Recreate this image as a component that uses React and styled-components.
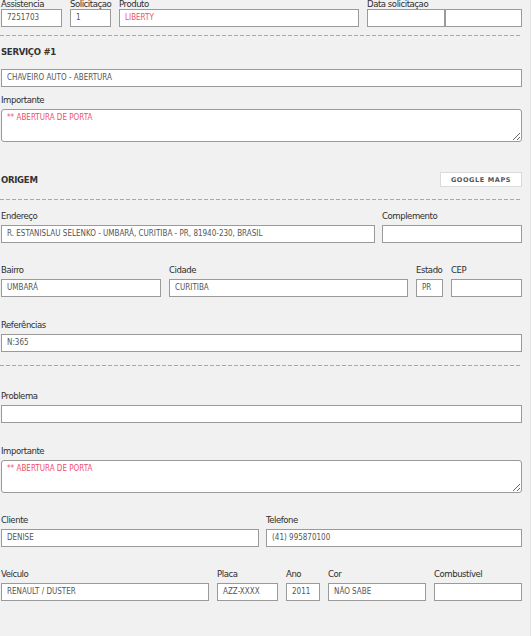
import React from "react";
import styled, { createGlobalStyle } from "styled-components";

const GlobalStyle = createGlobalStyle`
  html, body { margin: 0; padding: 0; background: #f1f1f1; }
  body { font-family: "DejaVu Sans Condensed", "DejaVu Sans", sans-serif; color: #333; overflow: hidden; }
  * { box-sizing: border-box; }
`;

const Frame = styled.div`
  width: 531px;
  height: 636px;
  overflow: hidden;
  border-right: 1px solid #e2e2e2;
`;

const Page = styled.div`
  margin-top: -3px;
  padding: 0 8px 0 1px;
  display: flex;
  flex-direction: column;
`;

const Row = styled.div`
  display: grid;
  grid-template-columns: ${(p) => p.$cols};
  column-gap: ${(p) => p.$gap || "8px"};
  margin-top: ${(p) => p.$mt || "0px"};
`;

const Field = styled.div`
  display: flex;
  flex-direction: column;
  min-width: 0;
  margin-top: ${(p) => p.$mt || "0px"};
`;

const Label = styled.label`
  font-size: 9.5px;
  letter-spacing: -0.45px;
  line-height: 14px;
  height: 14px;
  margin-bottom: ${(p) => (p.$tight ? "-2px" : "2px")};
  color: #2e2e2e;
  white-space: nowrap;
`;

const Input = styled.div`
  height: 18px;
  background: #fff;
  border: 1px solid #9a9a9a;
  padding: 0 5px;
  font-size: 8px;
  line-height: 16px;
  color: ${(p) => (p.$alert ? "#f0506e" : "#555")};
  white-space: nowrap;
  overflow: hidden;
`;

const Split = styled.div`
  display: grid;
  grid-template-columns: 1fr 1fr;
`;

const TextArea = styled.textarea`
  display: block;
  width: 100%;
  height: 33px;
  background: #fff;
  border: 1px solid #9a9a9a;
  border-radius: 3px;
  padding: 3px 5px;
  margin: 0;
  font-family: "DejaVu Sans Condensed", "DejaVu Sans", sans-serif;
  font-size: 8px;
  line-height: 10px;
  color: #f0506e;
  outline: none;
`;

const Divider = styled.div`
  height: 1px;
  margin-top: ${(p) => p.$mt || "0px"};
  margin-left: -1px;
  background: repeating-linear-gradient(
    to right,
    #a8a8a8 0 4px,
    transparent 4px 6px
  );
`;

const Heading = styled.div`
  font-size: 9.5px;
  letter-spacing: -0.3px;
  font-weight: bold;
  line-height: 14px;
  color: #333;
  margin-top: ${(p) => p.$mt || "0px"};
  margin-bottom: ${(p) => p.$mb || "0px"};
`;

const HeaderBar = styled.div`
  display: flex;
  align-items: center;
  justify-content: space-between;
  height: 15px;
  margin-top: ${(p) => p.$mt || "0px"};
`;

const MapButton = styled.button`
  width: 82px;
  height: 15px;
  margin: 0;
  padding: 0;
  background: #fff;
  border: 1px solid #dadada;
  font-family: "DejaVu Sans", sans-serif;
  font-size: 6.5px;
  font-weight: bold;
  letter-spacing: 0.6px;
  color: #555;
  cursor: pointer;
`;

export default function App() {
  return (
    <>
      <GlobalStyle />
      <Frame>
        <Page>
          <Row $cols="61px 41px 1fr 155px">
            <Field>
              <Label $tight>Assistencia</Label>
              <Input>7251703</Input>
            </Field>
            <Field>
              <Label $tight>Solicitaçao</Label>
              <Input>1</Input>
            </Field>
            <Field>
              <Label $tight>Produto</Label>
              <Input $alert>LIBERTY</Input>
            </Field>
            <Field>
              <Label $tight>Data solicitaçao</Label>
              <Split>
                <Input />
                <Input />
              </Split>
            </Field>
          </Row>

          <Divider $mt="8px" />
          <Heading $mt="9px" $mb="10px">SERVIÇO #1</Heading>
          <Input>CHAVEIRO AUTO - ABERTURA</Input>
          <Field $mt="6px">
            <Label>Importante</Label>
            <TextArea defaultValue="** ABERTURA DE PORTA" />
          </Field>

          <HeaderBar $mt="30px">
            <Heading>ORIGEM</Heading>
            <MapButton>GOOGLE MAPS</MapButton>
          </HeaderBar>
          <Divider $mt="12px" />

          <Row $cols="1fr 140px" $gap="7px" $mt="9px">
            <Field>
              <Label>Endereço</Label>
              <Input>R. ESTANISLAU SELENKO - UMBARÁ, CURITIBA - PR, 81940-230, BRASIL</Input>
            </Field>
            <Field>
              <Label>Complemento</Label>
              <Input />
            </Field>
          </Row>

          <Row $cols="160px 1fr 27px 71px" $mt="20px">
            <Field>
              <Label>Bairro</Label>
              <Input>UMBARÁ</Input>
            </Field>
            <Field>
              <Label>Cidade</Label>
              <Input>CURITIBA</Input>
            </Field>
            <Field>
              <Label>Estado</Label>
              <Input>PR</Input>
            </Field>
            <Field>
              <Label>CEP</Label>
              <Input />
            </Field>
          </Row>

          <Field $mt="21px">
            <Label>Referências</Label>
            <Input>N:365</Input>
          </Field>

          <Divider $mt="13px" />

          <Field $mt="23px">
            <Label>Problema</Label>
            <Input />
          </Field>

          <Field $mt="21px">
            <Label>Importante</Label>
            <TextArea defaultValue="** ABERTURA DE PORTA" />
          </Field>

          <Row $cols="258px 1fr" $gap="7px" $mt="20px">
            <Field>
              <Label>Cliente</Label>
              <Input>DENISE</Input>
            </Field>
            <Field>
              <Label>Telefone</Label>
              <Input>(41) 995870100</Input>
            </Field>
          </Row>

          <Row $cols="208px 61px 34px 98px 1fr" $mt="20px">
            <Field>
              <Label>Veículo</Label>
              <Input>RENAULT / DUSTER</Input>
            </Field>
            <Field>
              <Label>Placa</Label>
              <Input>AZZ-XXXX</Input>
            </Field>
            <Field>
              <Label>Ano</Label>
              <Input>2011</Input>
            </Field>
            <Field>
              <Label>Cor</Label>
              <Input>NÃO SABE</Input>
            </Field>
            <Field>
              <Label>Combustível</Label>
              <Input />
            </Field>
          </Row>
        </Page>
      </Frame>
    </>
  );
}
